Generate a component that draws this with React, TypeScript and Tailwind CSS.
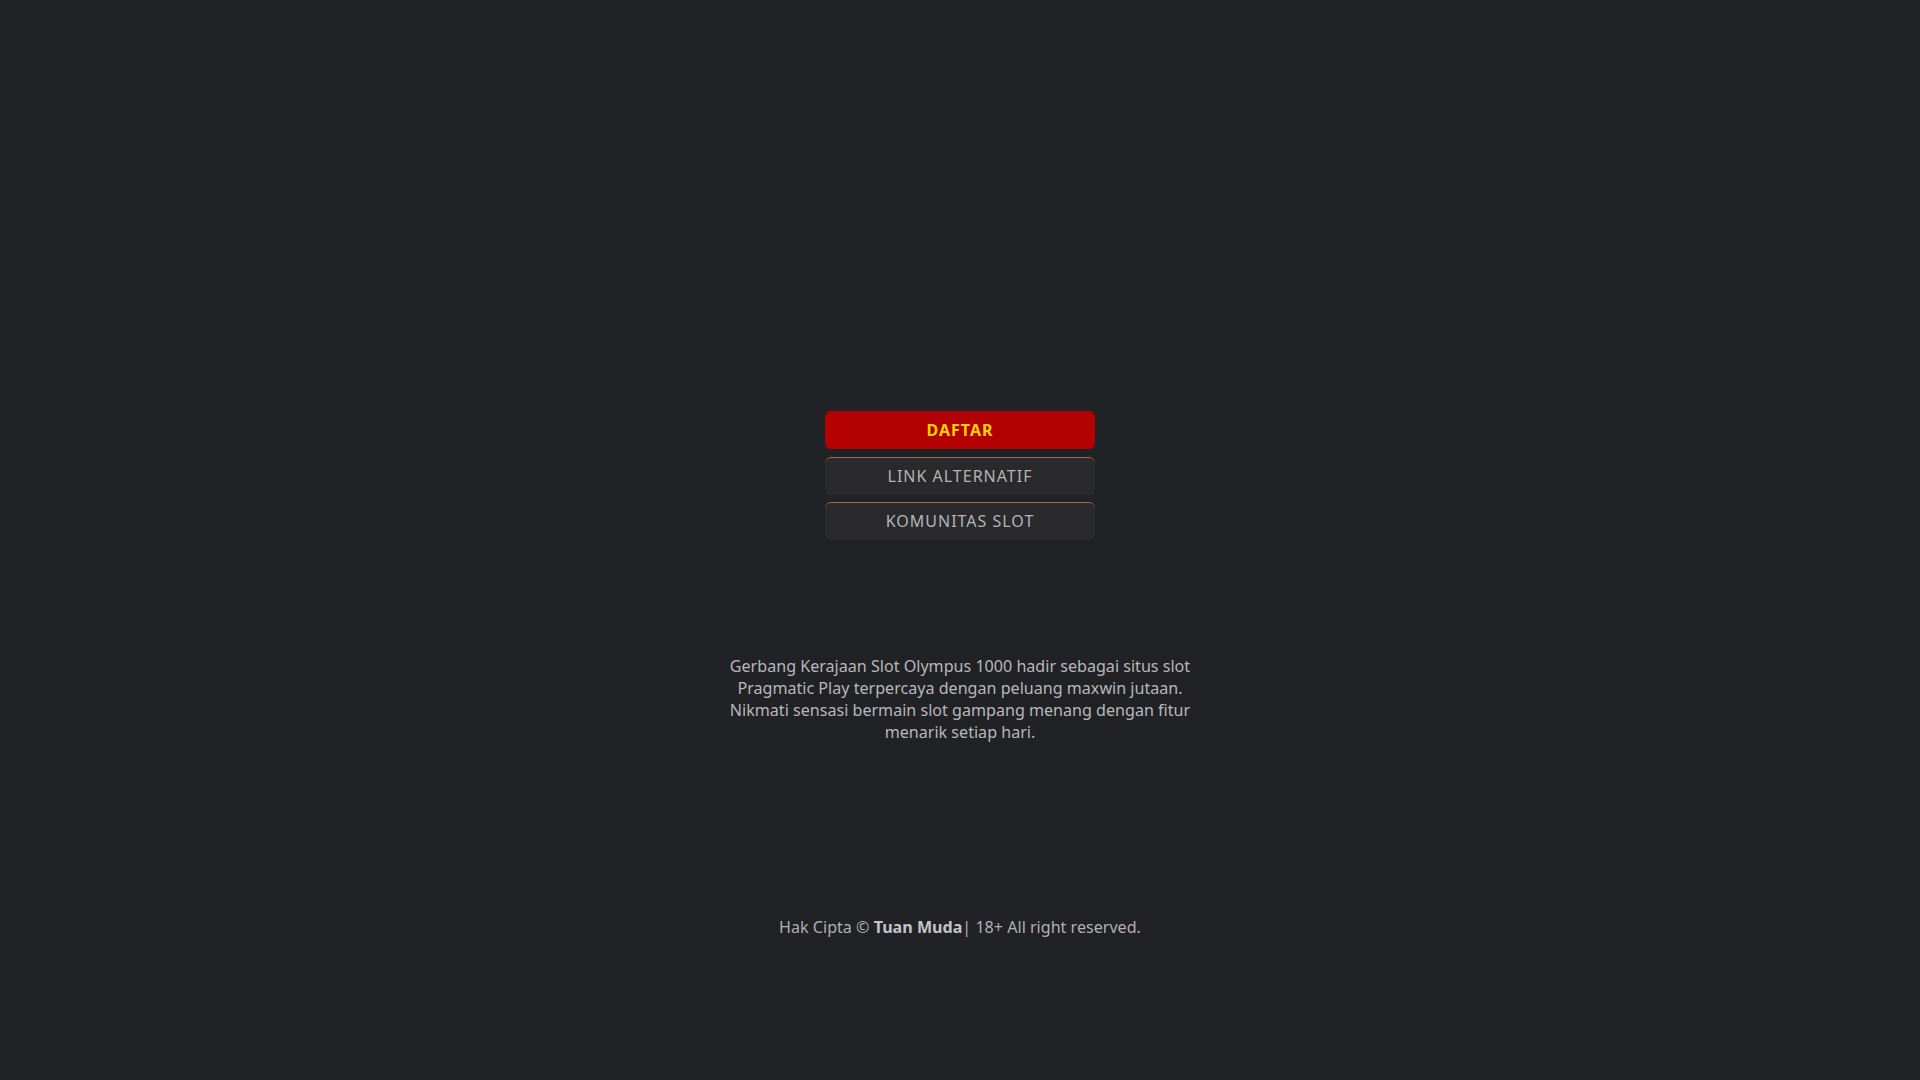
const LINKS = [
  { label: 'DAFTAR', primary: true },
  { label: 'LINK ALTERNATIF', primary: false },
  { label: 'KOMUNITAS SLOT', primary: false },
];

function NavButton({ label, primary }: { label: string; primary: boolean }) {
  if (primary) {
    return (
      <a className="flex h-[38px] w-[270px] items-center justify-center rounded-[6px] bg-[#b30000] text-[16px] font-bold tracking-[1px] text-[#ffd200]">
        {label}
      </a>
    );
  }
  return (
    <a className="flex h-[38px] w-[270px] items-center justify-center rounded-[6px] border-t border-[#8c7650] bg-[#2a2a2d] pb-[1px] text-[16px] tracking-[1px] text-[#b4b4b6]">
      {label}
    </a>
  );
}

export default function App() {
  return (
    <div
      className="flex min-h-screen w-full flex-col items-center bg-[#212226] text-[#b8b8ba]"
      style={{ fontFamily: '"Noto Sans", "Open Sans", sans-serif' }}
    >
      <nav className="mt-[411px] flex flex-col items-center gap-[7.5px]">
        {LINKS.map((l) => (
          <NavButton key={l.label} label={l.label} primary={l.primary} />
        ))}
      </nav>

      <p className="mt-[115px] w-[470px] text-center text-[16.1px] leading-[22px]">
        Gerbang Kerajaan Slot Olympus 1000 hadir sebagai situs slot Pragmatic Play terpercaya dengan peluang maxwin jutaan. Nikmati sensasi bermain slot gampang menang dengan fitur menarik setiap hari.
      </p>

      <footer className="mt-[173px] pb-[130px] text-center text-[16.1px] leading-[22px] text-[#b0b0b2]">
        Hak Cipta © <strong className="font-bold text-[#c4c4c6]">Tuan Muda</strong>| 18+ All right reserved.
      </footer>
    </div>
  );
}
